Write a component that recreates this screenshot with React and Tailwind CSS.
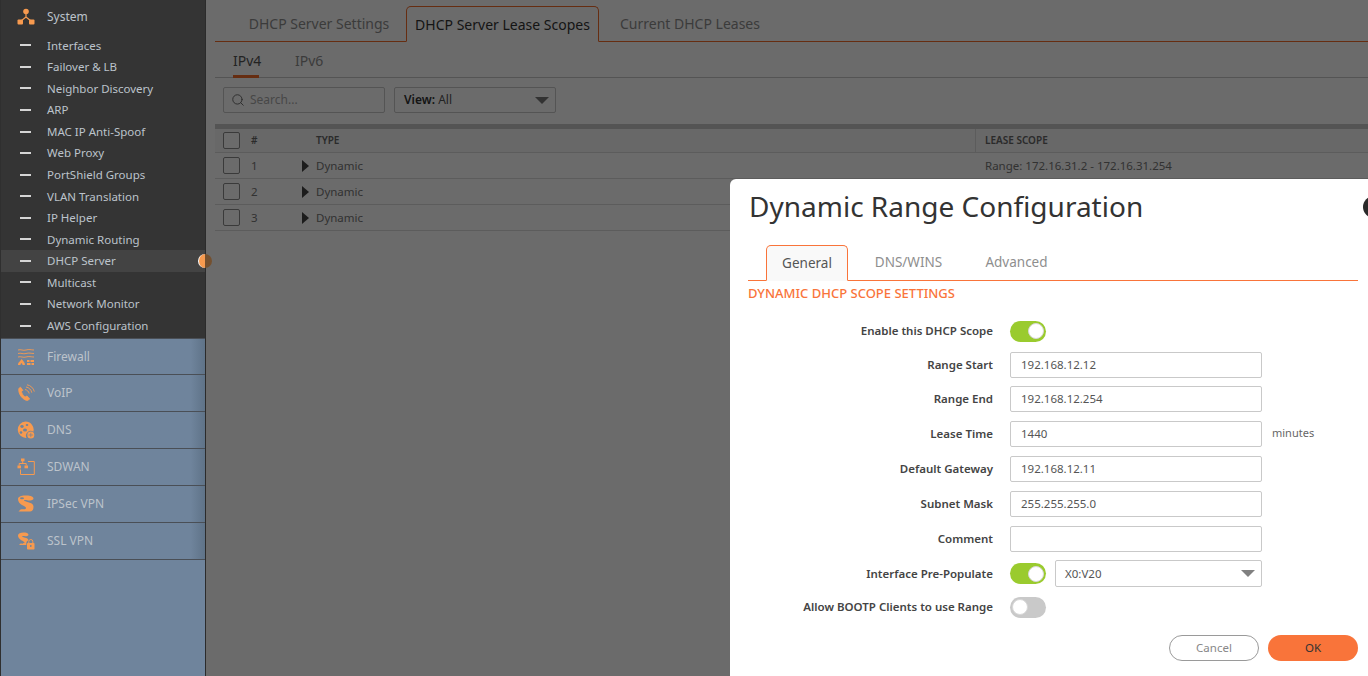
import React from "react";
import { Search } from "lucide-react";

const items = ["Interfaces","Failover & LB","Neighbor Discovery","ARP","MAC IP Anti-Spoof","Web Proxy","PortShield Groups","VLAN Translation","IP Helper","Dynamic Routing","DHCP Server","Multicast","Network Monitor","AWS Configuration"];

const O = "#f79a4f";
const SystemIcon = () => (
  <svg width="18" height="18" viewBox="0 0 18 18" fill={O}>
    <circle cx="9" cy="3.500" r="2.800"/><rect x="0.500" y="11.500" width="5.500" height="5" rx="1"/><rect x="12" y="11.500" width="5.500" height="5" rx="1"/>
    <path d="M9 5v4L4 13M9 9l5 4" stroke={O} strokeWidth="1.200" fill="none"/>
  </svg>
);
const FirewallIcon = () => (
  <svg width="18" height="18" viewBox="0 0 18 18" fill={O}>
    <path d="M1 2c3-1 5 1 8 0s5 0 8 0M1 5.500c3-1 5 1 8 0s5 0 8 0M1 9c3-1 5 1 8 0s5 0 8 0" stroke={O} strokeWidth="0.900" fill="none"/>
    <path d="M1 17c0-3 2-3 3.500-6 1.500 2 3.500 3 3.500 6H5.500c0-1-.5-1.500-1-2-.5.500-1 1-1 2z"/>
    <path d="M10 12h2.500v2H10zM13.500 12H17v2h-3.500zM10 15h3.500v2H10zM14.500 15H17v2h-2.500z"/>
  </svg>
);
const VoipIcon = () => (
  <svg width="18" height="18" viewBox="0 0 18 18" fill="none" stroke={O}>
    <path d="M3.500 3.200 1.800 4.500c-.5 3 .8 6 2.500 8.200 1.700 2 3.800 3.700 6.200 3.800l2.200-1.500-2.700-3-1.900.9c-2-1.200-3.300-3.500-3.700-5.500l1.500-1z" fill={O} strokeWidth="0.800"/>
    <path d="M8 5.500c2 .3 3.800 2 4.200 4M9 3c3 .4 5.300 2.800 5.800 5.700M10 .8c3.500.5 6.700 3.400 7.300 6.800" strokeWidth="0.900"/>
  </svg>
);
const DnsIcon = () => (
  <svg width="18" height="18" viewBox="0 0 18 18" fill={O}>
    <path d="M8.500.5a8.200 8.200 0 1 0 1 16.400 4.800 4.800 0 0 1 6.900-6.200A8.200 8.200 0 0 0 8.500.5z"/>
    <ellipse cx="5" cy="5.500" rx="1.700" ry="1.400" fill="#6f849c"/>
    <ellipse cx="10" cy="4" rx="1.300" ry="1" fill="#6f849c"/>
    <ellipse cx="8" cy="9" rx="2" ry="1.500" fill="#6f849c"/>
    <ellipse cx="4" cy="11.500" rx="1.300" ry="1.200" fill="#6f849c"/>
    <circle cx="13.800" cy="14" r="3.500"/>
    <path d="M11.500 14h4.600M13.800 11.800v4.400" stroke="#6f849c" strokeWidth="0.700"/>
  </svg>
);
const SdwanIcon = () => (
  <svg width="18" height="18" viewBox="0 0 18 18" fill={O}>
    <path d="M11 3.500h6.300V16.500H3.500v-5" fill="none" stroke={O} strokeWidth="1"/>
    <rect x="4" y="0.500" width="3.500" height="2.800"/><rect x="0.500" y="7.500" width="3.500" height="2.800"/><rect x="7.500" y="7.500" width="3.500" height="2.800"/>
    <path d="M5.700 3v2.500M2.200 7.500v-2h7v2" fill="none" stroke={O} strokeWidth="1"/>
  </svg>
);
const IpsecIcon = () => (
  <svg width="18" height="18" viewBox="0 0 18 18" fill={O}>
    <path d="M1 4c0-2 3-3.500 7-3.500 4 0 8.500.5 8.500 3 0 1.500-2.500 2-4 2-2 0-3-.5-4.500-.5-1 0-1.500.5-.5 1 2 1 9 1.500 9 5.500 0 3-1 5-3.500 5H1.500l2-2C5 14 9 15 9 13c0-2-8-3-8-9z"/>
    <ellipse cx="5" cy="3.300" rx="2" ry="1" fill="#6f849c"/>
  </svg>
);
const SslIcon = () => (
  <svg width="18" height="18" viewBox="0 0 18 18" fill={O}>
    <path d="M1 3.500C1 1.500 3.500.5 6.500.5c2.500 0 5 .5 5 2.200 0 1.300-2 1.500-3 1.500-1.500 0-2.500-.3-3-.1-.8.400-.2.800.5 1 1.500.5 5 1 5.500 3.100-1 .3-2.200 1.500-2.200 3.300v1.500H2l1.500-1.500c2 .3 4 .2 4-1 0-1.500-6.500-2.500-6.500-7z"/>
    <rect x="10" y="11" width="7.500" height="6.500" rx="0.800"/>
    <path d="M11.800 11V9.500a2 2 0 0 1 4 0V11" fill="none" stroke={O} strokeWidth="1"/>
    <circle cx="13.800" cy="14" r="0.900" fill="#6f849c"/>
  </svg>
);

const groups = [["Firewall",FirewallIcon],["VoIP",VoipIcon],["DNS",DnsIcon],["SDWAN",SdwanIcon],["IPSec VPN",IpsecIcon],["SSL VPN",SslIcon]];

const Sidebar = () => (
  <aside className="w-[206px] h-full shrink-0 flex flex-col border-l border-l-[#2f2f2f] border-r border-r-[#2b2b2b] bg-[#6f849c] relative z-20">
    <div className="bg-[#343434] h-[337.600px] shrink-0">
      <div className="flex items-center h-[34.500px] pl-[16px] gap-[12px]">
        <SystemIcon />
        <span className="text-[12px] text-[#bcc3cb]">System</span>
      </div>
      <div>
        {items.map((t) => (
          <div key={t} className={"flex items-center h-[21.570px] pl-[19px] gap-[16px] relative " + (t === "DHCP Server" ? "bg-[#434343]" : "")}>
            <span className="w-[11px] h-[2px] bg-[#d5d5d5]"></span>
            <span className="text-[11.500px] text-[#bcc3cb] whitespace-nowrap">{t}</span>
            {t === "DHCP Server" && <span className="absolute right-[-7px] top-[3.500px] w-[14px] h-[14px] rounded-full bg-[linear-gradient(90deg,#f79a4f_50%,#74502f_50%)] border-l border-l-white z-10"></span>}
          </div>
        ))}
      </div>
    </div>
    {groups.map(([t, Icon]) => (
      <div key={t} className="flex items-center h-[36.900px] pl-[16px] gap-[12px] border-t border-t-[#4a4f56] bg-gradient-to-r from-[#6f849c] from-[93%] to-[#5f7388] shrink-0">
        <Icon />
        <span className="text-[12px] text-[#bcc3cb]">{t}</span>
      </div>
    ))}
    <div className="border-t border-t-[#4a4f56]"></div>
  </aside>
);

const Checkbox = () => <span className="block w-[17px] h-[17px] rounded-[2px] border border-[#8a8a8a] bg-white"></span>;

const rows = [["1","Range: 172.16.31.2 - 172.16.31.254"],["2",""],["3",""]];

const Main = () => (
  <main className="relative flex-1 min-w-0 h-full bg-white">
    <div className="pt-[6px] pl-[9px]">
      <div className="flex items-end h-[36px] border-b border-b-[#f26b2a] pl-[19px]">
        <div className="w-[172px] h-[35px] pr-[2px] flex items-center justify-center text-[14px] text-[#8e8e8e]">DHCP Server Settings</div>
        <div className="w-[193px] h-[36px] -mb-[1px] flex items-center justify-center text-[14px] text-[#333] bg-white border border-[#f26b2a] border-b-white rounded-t-[5px]">DHCP Server Lease Scopes</div>
        <div className="w-[182px] h-[35px] flex items-center justify-center text-[14px] text-[#8e8e8e]">Current DHCP Leases</div>
      </div>
      <div className="flex h-[36px] border-b border-b-[#c8c8c8] pl-[18px] gap-[36px]">
        <div className="h-[36px] pt-[8px] text-[14px] text-[#555] border-b-[3px] border-b-[#f26b2a] w-[26px] whitespace-nowrap">IPv4</div>
        <div className="h-[36px] pt-[8px] text-[14px] text-[#8e8e8e]">IPv6</div>
      </div>
      <div className="flex items-center gap-[9px] h-[46px] pb-[2px] pl-[8px]">
        <div className="w-[162px] h-[26px] border border-[#c8c8c8] rounded-[2px] flex items-center pl-[7px] gap-[5px]">
          <Search size={14} className="text-[#666]" strokeWidth={1.600} />
          <span className="text-[12px] text-[#aaa]">Search...</span>
        </div>
        <div className="w-[162px] h-[26px] border border-[#c8c8c8] rounded-[2px] flex items-center pl-[9px] pr-[6px] justify-between">
          <span className="text-[12px] text-[#555]"><b className="font-semibold text-[#333]">View:</b> All</span>
          <span className="w-0 h-0 border-x-[7px] border-x-transparent border-t-[7px] border-t-[#777]"></span>
        </div>
      </div>
      <div className="h-[5px] bg-[#c9c9c9]"></div>
      <div className="flex items-center h-[24px] border-b border-b-[#dcdcdc] pl-[8px] bg-[#f7f7f7]">
        <Checkbox />
        <span className="w-[20px] ml-[11px] text-[10px] font-semibold text-[#666]">#</span>
        <span className="w-[659px] ml-[45px] text-[10px] font-semibold text-[#666]">TYPE</span>
        <span className="h-full border-l border-l-[#dcdcdc] pl-[9px] flex items-center text-[10px] font-semibold text-[#666]">LEASE SCOPE</span>
      </div>
      {rows.map(([n, s]) => (
        <div key={n} className="flex items-center h-[26px] border-b border-b-[#dcdcdc] pl-[8px]">
          <Checkbox />
          <span className="w-[20px] ml-[11px] text-[11.500px] text-[#777]">{n}</span>
          <span className="ml-[31px] w-0 h-0 border-y-[6px] border-y-transparent border-l-[7px] border-l-[#444]"></span>
          <span className="w-[669px] ml-[7px] text-[11.500px] text-[#777]">Dynamic</span>
          <span className="text-[11.500px] text-[#777] whitespace-nowrap">{s}</span>
        </div>
      ))}
    </div>
    <div className="absolute inset-0 bg-black/[0.58]"></div>
  </main>
);

const Toggle = ({ on }) => (
  <span className={"w-[36px] h-[21px] rounded-full flex items-center shrink-0 px-[2px] " + (on ? "bg-[#9acb2e] justify-end" : "bg-[#c9c9c9] justify-start")}>
    <span className="w-[16px] h-[16px] rounded-full bg-white border border-[#d8d8d8]"></span>
  </span>
);

const Field = ({ label, children, h = "h-[35px]" }) => (
  <div className={"flex items-center " + h}>
    <label className="w-[263px] text-right text-[11.500px] font-semibold text-[#444] whitespace-nowrap">{label}</label>
    <div className="ml-[17px] flex items-center">{children}</div>
  </div>
);
const Input = ({ v }) => (
  <div className="w-[252px] h-[26px] border border-[#c9c9c9] rounded-[2px] flex items-center pl-[10px] text-[11.500px] text-[#555]">{v}</div>
);

const Modal = () => (
  <div className="absolute left-[730px] top-[179px] w-[660px] h-[520px] bg-white rounded-[6px] z-30">
    <span className="absolute right-[5px] top-[17px] w-[22px] h-[22px] rounded-full bg-[#2a2a2a]"></span>
    <h1 className="pl-[19px] pt-[7px] h-[66px] text-[28px] leading-[40px] text-[#333]">Dynamic Range Configuration</h1>
    <div className="ml-[18px] w-[610px] flex items-end h-[36px] border-b border-b-[#f9743a] pl-[18px]">
      <div className="w-[82px] h-[36px] -mb-[1px] flex items-center justify-center text-[13.500px] text-[#555] bg-[#f9f9f9] border border-[#f9743a] border-b-[#f9f9f9] rounded-t-[5px]">General</div>
      <div className="w-[121px] h-[35px] flex items-center justify-center text-[13.500px] text-[#8e8e8e]">DNS/WINS</div>
      <div className="w-[95px] h-[35px] flex items-center justify-center text-[13.500px] text-[#8e8e8e]">Advanced</div>
    </div>
    <div className="pl-[18px] pt-[3px] h-[33px] text-[13px] font-medium text-[#f9743a] uppercase">Dynamic DHCP Scope Settings</div>
    <Field label="Enable this DHCP Scope" h="h-[34px]"><Toggle on /></Field>
    <Field label="Range Start" h="h-[33px]"><Input v="192.168.12.12" /></Field>
    <Field label="Range End"><Input v="192.168.12.254" /></Field>
    <Field label="Lease Time"><Input v="1440" /><span className="ml-[10px] text-[11px] text-[#666]">minutes</span></Field>
    <Field label="Default Gateway"><Input v="192.168.12.11" /></Field>
    <Field label="Subnet Mask"><Input v="255.255.255.0" /></Field>
    <Field label="Comment"><Input v="" /></Field>
    <Field label="Interface Pre-Populate">
      <Toggle on />
      <div className="ml-[9px] w-[207px] h-[27px] border border-[#c9c9c9] rounded-[2px] flex items-center pl-[9px] pr-[6px] justify-between text-[11.500px] text-[#555]">
        <span>X0:V20</span>
        <span className="w-0 h-0 border-x-[7px] border-x-transparent border-t-[7px] border-t-[#808080]"></span>
      </div>
    </Field>
    <Field label="Allow BOOTP Clients to use Range" h="h-[32px]"><Toggle /></Field>
    <div className="flex justify-end gap-[9px] w-[628px] mt-[12px]">
      <button className="w-[90px] h-[26px] rounded-full border border-[#9a9a9a] bg-white text-[11.500px] text-[#888]">Cancel</button>
      <button className="w-[90px] h-[26px] rounded-full bg-[#f9743a] text-[11.500px] text-[#333]">OK</button>
    </div>
  </div>
);

export default function App() {
  return (
    <div className="relative w-[1368px] h-[676px] overflow-hidden flex font-['Lato',sans-serif]">
      <Sidebar />
      <Main />
      <Modal />
    </div>
  );
}
